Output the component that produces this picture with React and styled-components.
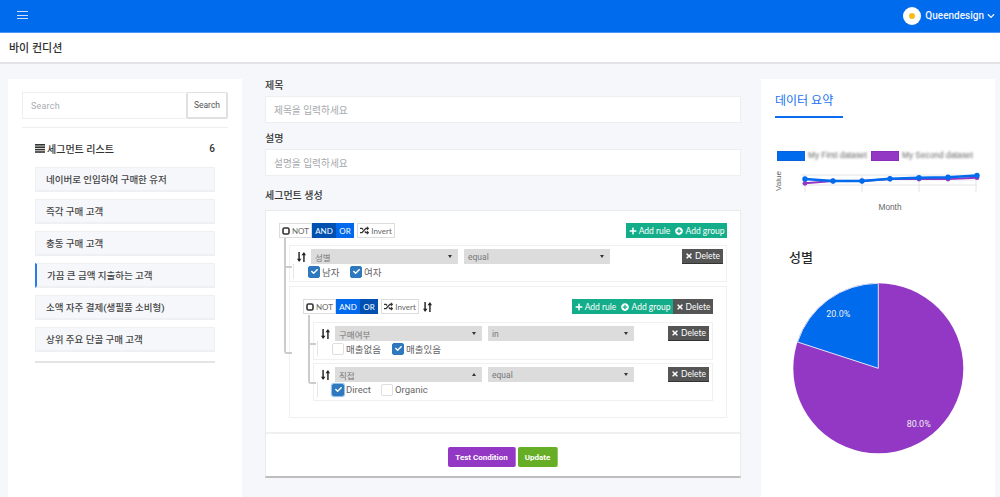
import React from 'react';
import styled, { createGlobalStyle } from 'styled-components';
import { FaPlus, FaPlusCircle, FaTimes, FaRandom, FaCheck, FaChevronDown } from 'react-icons/fa';

const Global = createGlobalStyle`
  html, body { margin: 0; padding: 0; }
  body { background: #f5f7fa; font-family: Roboto, "Noto Sans CJK KR", sans-serif; color: #333; overflow: hidden; }
  * { box-sizing: border-box; }
`;

const Page = styled.div`width: 1000px; height: 497px; overflow: hidden; background: #f5f7fa;`;

const TopBar = styled.header`
  height: 33px; background: #006bec; border-bottom: 1px solid #4a94f5;
  display: flex; align-items: center; justify-content: space-between; padding: 0 5px 0 17px; color: #fff;
`;
const Burger = styled.div`
  width: 11px; height: 8px; margin-top: -2px; border-top: 1px solid #cfe2fc; border-bottom: 1px solid #cfe2fc; position: relative;
  &::after { content: ''; position: absolute; left: 0; right: 0; top: 2.5px; height: 1px; background: #cfe2fc; }
`;
const UserMenu = styled.div`display: flex; align-items: center; gap: 3px; font-size: 10px; font-weight: 500; color: #eef5ff; margin-top: -1px;`;
const Avatar = styled.div`
  width: 18px; height: 18px; border-radius: 50%; background: #fff; display: flex; align-items: center; justify-content: center;
  margin-right: 1px;
  &::after { content: ''; width: 6px; height: 6px; border-radius: 50%; background: #f7bd1a; }
`;
const SubBar = styled.div`
  height: 31px; background: #fff; border-bottom: 2px solid #e2e4e8; display: flex; align-items: center; padding: 0 9px 1px;
  font-size: 11px; font-weight: 500; color: #2f2f2f;
`;
const Columns = styled.main`
  display: grid; grid-template-columns: 234px 499px 254px; padding: 15px 0 0 8px;
`;
const SideCard = styled.section`background: #fff; height: 418px; padding: 13px 14px;`;
const MiddleCol = styled.section`margin-left: 23px; width: 476px; padding-top: 1px;`;
const RightCard = styled(SideCard)`margin-left: 20px; padding: 0 14px;`;

const SearchRow = styled.div`display: flex; height: 27px;`;
const SearchInput = styled.div`
  flex: 1; border: 1px solid #edeef0; border-right: none; display: flex; align-items: center; padding-left: 8px;
  font-size: 9px; color: #a9acb1; letter-spacing: .2px;
`;
const SearchButton = styled.div`
  width: 42px; border: 1px solid #dfe0e2; border-width: 1px 2px 2px 2px; border-radius: 2px; display: flex; align-items: center; justify-content: center;
  font-size: 8.5px; color: #555;
`;
const Rule = styled.div`height: 1px; background: #edeef0; margin-top: 8px;`;
const ListHead = styled.div`
  display: flex; align-items: center; justify-content: space-between; margin: 14px 13px 0; height: 12px;
  font-size: 10px; font-weight: 500; color: #333;
`;
const ListTitle = styled.span`display: flex; align-items: center; gap: 2px;`;
const List = styled.div`
  margin: 13px 13px 0; display: flex; flex-direction: column; gap: 7px;
  padding-bottom: 9px; border-bottom: 2px solid #e3e4e6;
`;
const Item = styled.div`
  height: 25px; background: #f6f7fa; border: 1px solid #eff0f2; border-bottom-width: 2px;
  border-left: ${p => (p.$active ? '2px solid #2a7ce8' : '1px solid #eff0f2')};
  padding-left: 10px;
  display: flex; align-items: center; font-size: 9.5px; font-weight: 500; color: #444; white-space: nowrap;
`;

const FieldLabel = styled.label`display: block; font-size: 10px; font-weight: 500; color: #333; line-height: 12px; height: 12px; margin-top: ${p => p.$top || 0}px;`;
const TextField = styled.div`
  height: 27px; margin-top: 4px; background: #fff; border: 1px solid #eceef0; display: flex; align-items: center; padding-left: 8px;
  font-size: 9.7px; color: #a6a9ad;
`;
const BuilderCard = styled.div`
  margin-top: 8px; height: 268px; background: #fff; border: 1px solid #e9eaec; border-bottom: 2px solid #bdbdbd; display: flex; flex-direction: column;
`;
const BuilderBody = styled.div`height: 223px; padding: 12px 13px 0; border-bottom: 2px solid #f0f0f1;`;
const GroupHead = styled.div`display: flex; align-items: center; justify-content: space-between; height: 15px;`;
const HeadLeft = styled.div`display: flex; align-items: center;`;
const BtnGroup = styled.div`display: flex; height: 15px;`;
const ToggleBtn = styled.span`
  display: flex; align-items: center; justify-content: center; gap: 2px; height: 15px; padding: 0 2px; font-size: 8px; font-family: Lato, sans-serif;
  background: ${p => (p.$bg || '#fff')}; color: ${p => (p.$color || '#666')};
  border: 1px solid ${p => (p.$border || '#dcdcdc')};
  width: ${p => p.$w}px; margin-left: ${p => p.$ml || 0}px; margin-right: ${p => p.$mr || 0}px; white-space: nowrap;
`;
const ActionBtn = styled.span`
  display: flex; align-items: center; gap: 2px; height: 15px; padding: 0 2px; font-size: 8.5px; color: #fff; white-space: nowrap;
  font-family: Lato, sans-serif;
  background: ${p => p.$bg};
  width: ${p => p.$w}px;
  justify-content: center;
`;
const Connector = `
  content: ''; position: absolute; border-left: 2px solid #ccc; border-bottom: 2px solid #ccc;
`;
const RuleBox = styled.div`
  position: relative; margin-left: 10px; margin-top: ${p => p.$top}px; height: ${p => p.$h}px; background: #fff; border: 1px solid #f0f0f1;
  padding: 3px 3px 0 7px;
  &::before {
    ${Connector}
    left: -6px; width: 6px; top: ${p => p.$lineTop}px; height: ${p => p.$lineH}px;
    border-bottom-left-radius: ${p => p.$radius || 0}px;
  }
`;
const RuleRow = styled.div`display: flex; align-items: center; height: 15px;`;
const SortWrap = styled.span`display: flex; width: 10px; margin-right: 4px; color: #222; flex: none;`;
const SelectBox = styled.div`
  display: flex; align-items: center; justify-content: space-between; width: ${p => p.$w || 147}px; height: 15px; background: #dcdcdc; margin-left: ${p => p.$ml || 0}px;
  padding: 0 6px 0 4px; font-size: 8.5px; color: #777; flex: none;
`;
const Caret = styled.span`
  width: 0; height: 0; border-left: 2.5px solid transparent; border-right: 2.5px solid transparent;
  ${p => (p.$up ? 'border-bottom: 3px solid #333;' : 'border-top: 3px solid #333;')}
`;
const DeleteBtn = styled(ActionBtn)`margin-left: auto; background: #555; width: 41px; border-bottom: 1px solid #333;`;
const CheckRow = styled.div`
  display: flex; align-items: center; height: 15px; margin-left: -4px; border-left: 1px solid #e6e6e6; padding-left: 14px;
`;
const CheckWrap = styled.span`
  display: flex; align-items: center; gap: 2px; font-size: 9.5px; color: #666; width: ${p => p.$w}px; white-space: nowrap;
`;
const Box = styled.span`
  width: 12px; height: 12px; flex: none; border-radius: 2px; display: flex; align-items: center; justify-content: center; color: #fff; font-size: 7px;
  background: ${p => (p.$on ? '#2e79bd' : '#fff')}; border: 1px solid ${p => (p.$on ? '#2e79bd' : '#dedede')};
  box-shadow: ${p => (p.$focus ? '0 0 1px 1px #8ab8ea' : 'none')};
`;
const NestedGroup = styled.div`
  position: relative; margin: 4px 0 0 10px; height: 132px; background: #fff; border: 1px solid #f0f0f1; padding: 12px 13px 0;
  &::before {
    ${Connector}
    left: -6px; width: 6px; top: -22px; height: 87px; border-bottom-left-radius: 3px;
  }
`;
const Footer = styled.div`display: flex; justify-content: center; gap: 2px; padding-top: 13px;`;
const FootBtn = styled.span`
  height: 20px; width: ${p => p.$w}px; background: ${p => p.$bg}; color: #fff; font-size: 8px; font-weight: 700; border-radius: 2px;
  display: flex; align-items: center; justify-content: center; border-right: 1px solid rgba(255,255,255,.3);
`;

const Tab = styled.div`
  width: 68px; height: 39px; border-bottom: 2px solid #0a6cee; color: #1a73f0; font-size: 12px; display: flex; align-items: flex-end; padding-bottom: 8px; white-space: nowrap;
`;
const Legend = styled.div`display: flex; align-items: center; margin: 33px 0 0 2px; height: 10px;`;
const LegendSwatch = styled.span`width: 28px; height: 10px; flex: none; background: ${p => p.$c}; border: 1px solid ${p => p.$b}; margin-left: ${p => p.$ml || 0}px;`;
const LegendText = styled.span`font-family: "Liberation Sans", sans-serif; font-size: 8.3px; line-height: 9px; margin-top: -1px; color: #666; filter: blur(1.2px); margin-left: 3px; width: ${p => p.$w}px; flex: none; white-space: nowrap;`;
const LineSvg = styled.svg`display: block; margin-top: 4px;`;
const PieTitle = styled.h3`margin: 34px 0 0 14px; font-size: 13px; font-weight: 500; color: #2a2a2a; line-height: 18px; height: 18px;`;
const PieSvg = styled.svg`display: block;`;

const SortIcon = () => (
  <svg width="9" height="10" viewBox="0 0 10 11" fill="#222" style={{ flex: 'none' }}>
    <path d="M1.5 0h1.6v7.5H5L2.3 11 0 7.5h1.5zM6.9 11V3.5H5L7.7 0 10 3.5H8.5V11z" />
  </svg>
);
const ListIcon = () => (
  <svg width="10" height="9" viewBox="0 0 10 9" fill="#333">
    <rect y="0" width="10" height="1.6" /><rect y="2.4" width="10" height="1.6" /><rect y="4.8" width="10" height="1.6" /><rect y="7.2" width="10" height="1.6" />
  </svg>
);
const NotIcon = () => (
  <svg width="8" height="8" viewBox="0 0 8 8" style={{ flex: 'none' }}><rect x="1" y="1" width="6" height="6" rx="1.5" fill="none" stroke="#333" strokeWidth="1.6" /></svg>
);

const NotAndOr = ({ nested }) => (
  <>
    <BtnGroup>
      <ToggleBtn $w={33}><NotIcon />NOT</ToggleBtn>
      <ToggleBtn $w={24} $bg={nested ? '#0069ee' : '#0050b0'} $color="#fff" $border={nested ? '#0069ee' : '#0050b0'}>AND</ToggleBtn>
      <ToggleBtn $w={18} $bg={nested ? '#0050b0' : '#0069ee'} $color="#fff" $border={nested ? '#0050b0' : '#0069ee'}>OR</ToggleBtn>
    </BtnGroup>
    <ToggleBtn $w={38} $ml={3} $mr={4}><FaRandom size={9} color="#333" />Invert</ToggleBtn>
  </>
);
const AddBtns = () => (
  <>
    <ActionBtn $bg="#14ad8a" $w={47}><FaPlus size={8} />Add rule</ActionBtn>
    <ActionBtn $bg="#14ad8a" $w={54}><FaPlusCircle size={8} />Add group</ActionBtn>
  </>
);
const Delete = () => <DeleteBtn $bg="#555"><FaTimes size={8} />Delete</DeleteBtn>;
const Check = ({ on, focus, w, children }) => (
  <CheckWrap $w={w}><Box $on={on} $focus={focus}>{on && <FaCheck />}</Box>{children}</CheckWrap>
);

const items = ['네이버로 인입하여 구매한 유저', '즉각 구매 고객', '충동 구매 고객', '가끔 큰 금액 지출하는 고객', '소액 자주 결제(생필품 소비형)', '상위 주요 단골 구매 고객'];

const xs = [30, 58, 87, 115, 144, 173, 202];
const blueY = [14, 16, 16, 13.7, 12.7, 12.3, 10.5];
const purpleY = [18.3, 16, 16, 14, 14, 14, 12.7];
const toPts = ys => xs.map((x, i) => `${x},${ys[i]}`).join(' ');
const chartFont = '"Liberation Sans", sans-serif';

export default function App() {
  return (
    <Page>
      <Global />
      <TopBar>
        <Burger />
        <UserMenu><Avatar />Queendesign<FaChevronDown size={8} /></UserMenu>
      </TopBar>
      <SubBar>바이 컨디션</SubBar>
      <Columns>
        <SideCard>
          <SearchRow>
            <SearchInput>Search</SearchInput>
            <SearchButton>Search</SearchButton>
          </SearchRow>
          <Rule />
          <ListHead>
            <ListTitle><ListIcon />세그먼트 리스트</ListTitle>
            <span>6</span>
          </ListHead>
          <List>
            {items.map((t, i) => <Item key={t} $active={i === 3}>{t}</Item>)}
          </List>
        </SideCard>

        <MiddleCol>
          <FieldLabel>제목</FieldLabel>
          <TextField>제목을 입력하세요</TextField>
          <FieldLabel $top={10}>설명</FieldLabel>
          <TextField>설명을 입력하세요</TextField>
          <FieldLabel $top={14}>세그먼트 생성</FieldLabel>
          <BuilderCard>
            <BuilderBody>
              <GroupHead>
                <HeadLeft><NotAndOr /></HeadLeft>
                <BtnGroup><AddBtns /></BtnGroup>
              </GroupHead>
              <RuleBox $top={7} $h={37} $lineTop={-8} $lineH={28}>
                <RuleRow>
                  <SortWrap><SortIcon /></SortWrap>
                  <SelectBox>성별<Caret /></SelectBox>
                  <SelectBox $ml={6} $w={146}>equal<Caret /></SelectBox>
                  <Delete />
                </RuleRow>
                <CheckRow>
                  <Check on w={42}>남자</Check>
                  <Check on w={42}>여자</Check>
                </CheckRow>
              </RuleBox>
              <NestedGroup>
                <GroupHead>
                  <HeadLeft><NotAndOr nested /><SortIcon /></HeadLeft>
                  <BtnGroup><AddBtns /><ActionBtn $bg="#555" $w={40}><FaTimes size={8} />Delete</ActionBtn></BtnGroup>
                </GroupHead>
                <RuleBox $top={8} $h={38} $lineTop={-8} $lineH={28}>
                  <RuleRow>
                    <SortWrap><SortIcon /></SortWrap>
                    <SelectBox>구매여부<Caret /></SelectBox>
                    <SelectBox $ml={6} $w={146}>in<Caret /></SelectBox>
                    <Delete />
                  </RuleRow>
                  <CheckRow>
                    <Check w={60}>매출없음</Check>
                    <Check on w={60}>매출있음</Check>
                  </CheckRow>
                </RuleBox>
                <RuleBox $top={3} $h={38} $lineTop={-22} $lineH={40} $radius={3}>
                  <RuleRow>
                    <SortWrap><SortIcon /></SortWrap>
                    <SelectBox>직접<Caret $up /></SelectBox>
                    <SelectBox $ml={6} $w={146}>equal<Caret /></SelectBox>
                    <Delete />
                  </RuleRow>
                  <CheckRow>
                    <Check on focus w={49}>Direct</Check>
                    <Check w={60}>Organic</Check>
                  </CheckRow>
                </RuleBox>
              </NestedGroup>
            </BuilderBody>
            <Footer>
              <FootBtn $w={68} $bg="#9238c4">Test Condition</FootBtn>
              <FootBtn $w={40} $bg="#66ae25">Update</FootBtn>
            </Footer>
          </BuilderCard>
        </MiddleCol>

        <RightCard>
          <Tab>데이터 요약</Tab>
          <Legend>
            <LegendSwatch $c="#006bec" $b="#0a63d8" />
            <LegendText $w={60}>My First dataset</LegendText>
            <LegendSwatch $c="#9238c4" $b="#8a2fbb" $ml={3} />
            <LegendText $w={70}>My Second dataset</LegendText>
          </Legend>
          <LineSvg width="206" height="50" viewBox="0 0 206 50">
            <text transform="translate(6 16) rotate(-90)" textAnchor="middle" fontSize="8.1" fill="#666" fontFamily={chartFont}>Value</text>
            {[10, 15, 20].map(y => <line key={y} x1="26" x2="202" y1={y} y2={y} stroke="#e4e4e4" strokeWidth="1" />)}
            {[30, 87, 144, 201].map(x => <line key={x} x1={x} x2={x} y1="10" y2="27" stroke="#e4e4e4" strokeWidth="1" />)}
            <polyline points={toPts(purpleY)} fill="none" stroke="#9238c4" strokeWidth="2" />
            {xs.map((x, i) => <circle key={x} cx={x} cy={purpleY[i]} r="2.4" fill="#9238c4" />)}
            <polyline points={toPts(blueY)} fill="none" stroke="#006bec" strokeWidth="2.5" />
            {xs.map((x, i) => <circle key={x} cx={x} cy={blueY[i]} r="2.7" fill="#006bec" />)}
            <text x="115" y="45" textAnchor="middle" fontSize="8.3" fill="#666" fontFamily={chartFont}>Month</text>
          </LineSvg>
          <PieTitle>성별</PieTitle>
          <PieSvg width="206" height="197" viewBox="0 0 206 197">
            <circle cx="103.3" cy="101.3" r="85" fill="#9238c4" />
            <path d="M103.3 101.3 L103.3 16.3 A85 85 0 0 0 22.5 75 Z" fill="#006bec" stroke="#e8e3f7" strokeWidth="1" />
            <text x="63.3" y="49.7" textAnchor="middle" fontSize="9" fill="#eee" fontFamily="Roboto, sans-serif">20.0%</text>
            <text x="143.7" y="160" textAnchor="middle" fontSize="9" fill="#eee" fontFamily="Roboto, sans-serif">80.0%</text>
          </PieSvg>
        </RightCard>
      </Columns>
    </Page>
  );
}
